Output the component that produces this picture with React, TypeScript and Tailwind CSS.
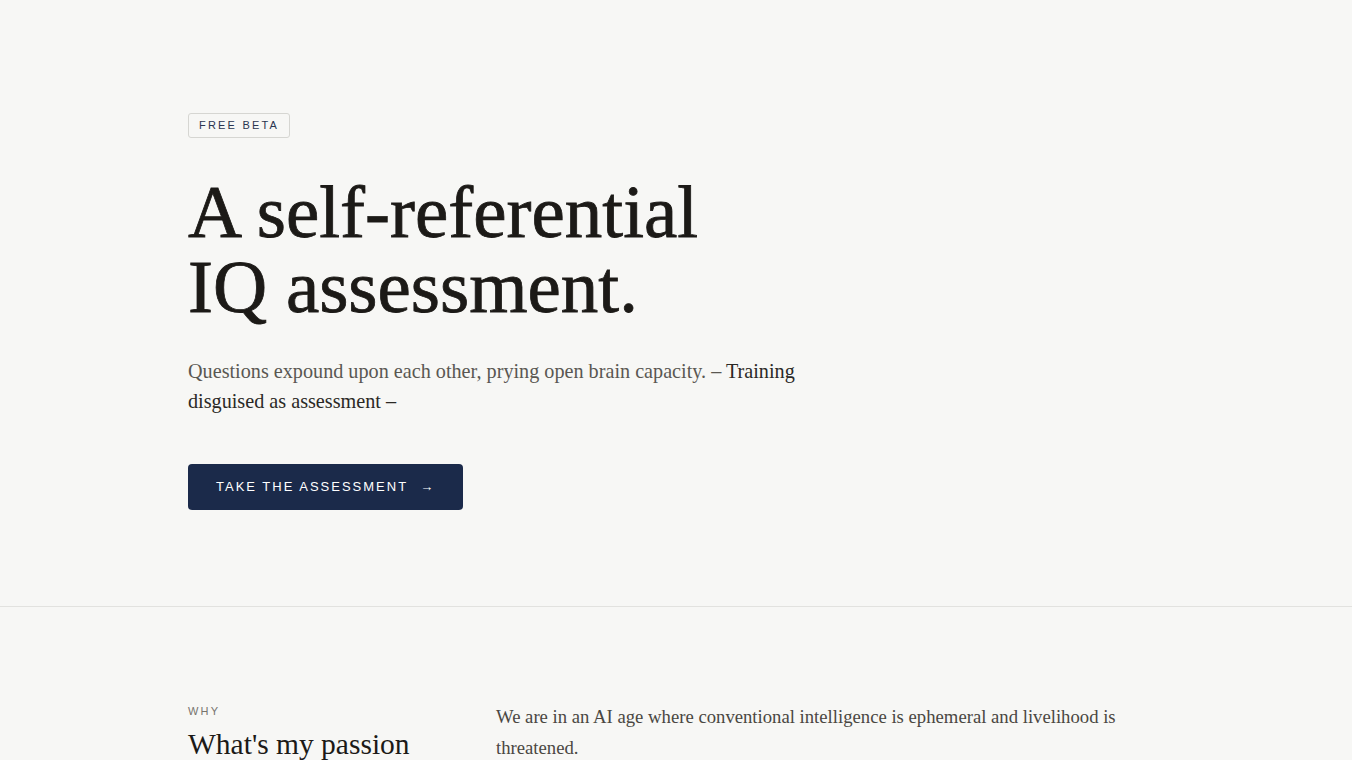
import React from "react";

const serif = { fontFamily: '"Liberation Serif", "Times New Roman", serif' };
const sans = { fontFamily: '"Liberation Sans", Arial, sans-serif' };

export default function App() {
  return (
    <div className="min-h-screen bg-[#f7f7f5] text-[#1c1a17]">
      {/* Hero */}
      <section className="border-b border-[#e2e2df]">
        <div className="mx-auto max-w-[976px] pt-[111px] pb-[96px]">
          <span
            style={sans}
            className="inline-flex h-[25px] items-center rounded-[3px] border border-[#d6d6d2] px-[10px] text-[11px] tracking-[0.2em] text-[#2a3550]"
          >
            FREE BETA
          </span>
          <h1
            style={serif}
            className="mt-[36px] text-[75px] leading-[75px] font-normal [-webkit-text-stroke:0.8px_#1c1a17] text-[#1c1a17]"
          >
            A self-referential
            <br />
            IQ assessment.
          </h1>
          <p
            style={serif}
            className="mt-[32px] max-w-[640px] text-[20.2px] leading-[30px] text-[#5a5752]"
          >
            Questions expound upon each other, prying open brain capacity. –{" "}
            <span className="text-[#2b2925]">Training disguised as assessment –</span>
          </p>
          <button
            style={sans}
            className="mt-[48px] flex h-[46px] items-center rounded-[4px] bg-[#1b2a4a] px-[28px] text-[13px] tracking-[2px] text-white"
          >
            TAKE THE ASSESSMENT
            <span className="ml-[12px]">→</span>
          </button>
        </div>
      </section>

      {/* Why */}
      <section>
        <div className="mx-auto flex max-w-[976px] pt-[97px]">
          <div className="w-[308px] shrink-0">
            <div style={sans} className="text-[11px] leading-[14px] tracking-[0.2em] text-[#76736d]">
              WHY
            </div>
            <h2 style={serif} className="mt-[9px] text-[29.5px] leading-[34px] text-[#1c1a17]">
              What's my passion
            </h2>
          </div>
          <p style={serif} className="-mt-[3px] max-w-[650px] text-[18.7px] leading-[31px] text-[#4a4742]">
            We are in an AI age where conventional intelligence is ephemeral and livelihood is
            threatened.
          </p>
        </div>
      </section>
    </div>
  );
}
